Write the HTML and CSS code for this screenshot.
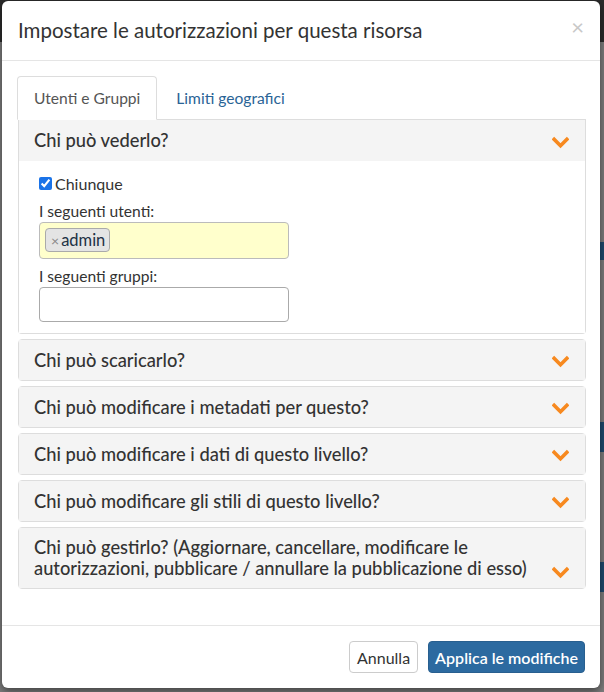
FILE: index.html
```html
<!DOCTYPE html>
<html lang="it">
<head>
<meta charset="utf-8">
<title>Autorizzazioni</title>
<link rel="stylesheet" href="styles.css">
</head>
<body>
<div class="backdrop-strip"></div>
<div class="modal">
  <div class="modal-header">
    <h4 class="modal-title">Impostare le autorizzazioni per questa risorsa</h4>
    <span class="close">×</span>
  </div>
  <div class="modal-body">
    <ul class="nav-tabs">
      <li class="tab active">Utenti e Gruppi</li>
      <li class="tab link">Limiti geografici</li>
    </ul>
    <div class="panel-group">
      <div class="panel open">
        <div class="panel-heading"><span class="panel-title">Chi può vederlo?</span><svg class="chev" viewBox="0 0 16 12"><polyline points="2,3 8,9 14,3"/></svg></div>
        <div class="panel-body">
          <label class="check"><input type="checkbox" checked><span>Chiunque</span></label>
          <div class="field-label">I seguenti utenti:</div>
          <div class="select yellow"><span class="tag"><span class="tag-x">×</span>admin</span></div>
          <div class="field-label second">I seguenti gruppi:</div>
          <div class="select"></div>
        </div>
      </div>
      <div class="panel">
        <div class="panel-heading"><span class="panel-title">Chi può scaricarlo?</span><svg class="chev" viewBox="0 0 16 12"><polyline points="2,3 8,9 14,3"/></svg></div>
      </div>
      <div class="panel">
        <div class="panel-heading"><span class="panel-title">Chi può modificare i metadati per questo?</span><svg class="chev" viewBox="0 0 16 12"><polyline points="2,3 8,9 14,3"/></svg></div>
      </div>
      <div class="panel">
        <div class="panel-heading"><span class="panel-title">Chi può modificare i dati di questo livello?</span><svg class="chev" viewBox="0 0 16 12"><polyline points="2,3 8,9 14,3"/></svg></div>
      </div>
      <div class="panel">
        <div class="panel-heading"><span class="panel-title">Chi può modificare gli stili di questo livello?</span><svg class="chev" viewBox="0 0 16 12"><polyline points="2,3 8,9 14,3"/></svg></div>
      </div>
      <div class="panel">
        <div class="panel-heading tall"><span class="panel-title">Chi può gestirlo? (Aggiornare, cancellare, modificare le autorizzazioni, pubblicare / annullare la pubblicazione di esso)</span><svg class="chev" viewBox="0 0 16 12"><polyline points="2,3 8,9 14,3"/></svg></div>
      </div>
    </div>
  </div>
  <div class="modal-footer">
    <button class="btn btn-default">Annulla</button>
    <button class="btn btn-primary">Applica le modifiche</button>
  </div>
</div>
</body>
</html>
```
FILE: styles.css
```css
* { box-sizing: border-box; }
html, body { margin: 0; padding: 0; }
body {
  width: 604px;
  height: 692px;
  overflow: hidden;
  font-family: Lato, "Open Sans", sans-serif;
  color: #333;
  background: linear-gradient(#2b2b2b 0, #2b2b2b 42px, #7d7d7d 42px, #7d7d7d 100%);
  position: relative;
}
.backdrop-strip {
  position: absolute;
  right: 0;
  top: 42px;
  width: 4px;
  height: 650px;
  background: linear-gradient(#7d7d7d 0, #7d7d7d 200px, #1f4a6e 200px, #1f4a6e 218px, #7d7d7d 218px, #7d7d7d 380px, #1f4a6e 380px, #1f4a6e 410px, #7d7d7d 410px, #7d7d7d 520px, #1f4a6e 520px, #1f4a6e 550px, #7d7d7d 550px);
}
.modal {
  position: relative;
  margin: 1px 0 0 2px;
  width: 598px;
  height: 687px;
  background: #fff;
  border-radius: 6px;
  box-shadow: 0 3px 9px rgba(0,0,0,.5);
  display: flex;
  flex-direction: column;
}
.modal-header {
  height: 60px;
  padding: 0 16px;
  border-bottom: 1px solid #e5e5e5;
  display: flex;
  align-items: center;
  justify-content: space-between;
}
.modal-title {
  margin: -2px 0 0 0;
  font-size: 20.5px;
  font-weight: 400;
  color: #333;
}
.close {
  font-size: 22px;
  color: #c8c8c8;
  line-height: 1;
  margin-top: -8px;
}
.modal-body {
  flex: 1;
  padding: 15px 14px 0 15px;
}
.nav-tabs {
  list-style: none;
  margin: 0;
  padding: 0;
  display: flex;
  height: 44px;
  border-bottom: 1px solid #ddd;
}
.tab {
  padding: 0 16px;
  font-size: 15.6px;
  line-height: 43px;
  margin-right: 2px;
  border: 1px solid transparent;
  border-radius: 4px 4px 0 0;
}
.tab.active {
  border-color: #ddd;
  border-bottom-color: #fff;
  background: #fff;
  height: 44px;
  color: #555;
}
.tab.link { color: #2a6496; }
.panel-group {
  margin-left: 1px;
  display: flex;
  flex-direction: column;
  gap: 5px;
}
.panel {
  border: 1px solid #ddd;
  border-radius: 4px;
  background: #f4f4f4;
}
.panel.open { border-top: 0; border-radius: 0 0 4px 4px; background: #fff; }
.panel-heading {
  display: flex;
  align-items: center;
  justify-content: space-between;
  padding: 0 16px 0 15px;
  height: 40px;
  background: #f4f4f4;
}
.panel.open .panel-heading { height: 41px; }
.panel-heading.tall { height: 60px; }
.panel-title {
  font-size: 18.3px;
  font-weight: 500;
  color: #333;
  line-height: 21px;
}
.chev {
  flex: none;
  width: 17px;
  height: 13px;
  margin-top: 3px;
  fill: none;
  stroke: #f7891f;
  stroke-width: 3.4;
  stroke-linecap: square;
}
.panel-heading.tall .chev { margin-top: 28px; }
.panel-body {
  padding: 12px 20px 11px 20px;
  background: #fff;
}
.check {
  display: flex;
  align-items: center;
  font-size: 16px;
  height: 20px;
}
.check input {
  margin: 0 3px 0 0;
  width: 13px;
  height: 13px;
  accent-color: #1a73e8;
}
.field-label {
  font-size: 15.6px;
  margin-top: 9px;
  height: 18px;
  line-height: 18px;
}
.field-label.second { margin-top: 8px; }
.select {
  margin-top: 2px;
  width: 250px;
  height: 35px;
  border: 1px solid #aaa;
  border-radius: 4px;
  background: #fff;
  padding: 5px;
}
.select.yellow {
  height: 37px;
  background: #ffffcc;
  border-color: #bbb;
}
.tag {
  display: inline-flex;
  align-items: center;
  height: 24px;
  padding: 0 4px 0 5px;
  font-size: 16.5px;
  color: #1d3144;
  background: #e4e4e4;
  border: 1px solid #aaa;
  border-radius: 4px;
}
.tag-x {
  color: #888;
  font-size: 14px;
  margin-right: 2px;
}
.modal-footer {
  border-top: 1px solid #e5e5e5;
  padding: 15px 15px 15px 15px;
  display: flex;
  justify-content: flex-end;
  gap: 10px;
}
.btn {
  font-family: Lato, sans-serif;
  font-size: 16px;
  height: 32px;
  padding: 0 7px;
  border-radius: 4px;
  border: 1px solid #ccc;
  background: #fff;
  color: #333;
}
.btn-primary {
  padding: 0 6px;
  background: #2c6aa0;
  border-color: #285f8f;
  color: #fff;
  font-weight: 600;
}
```
